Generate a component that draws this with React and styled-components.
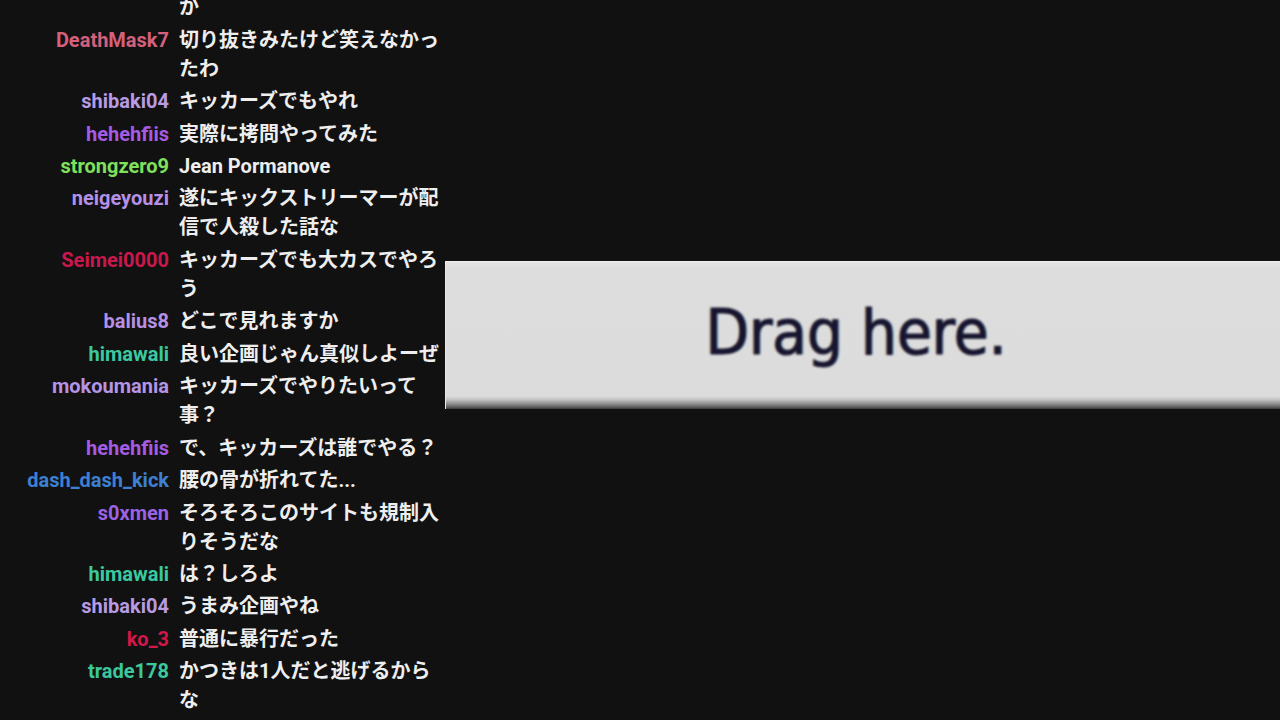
import React from "react";
import styled, { createGlobalStyle } from "styled-components";

const Global = createGlobalStyle`
  html, body { margin: 0; padding: 0; background: #111111; }
  body { overflow: hidden; }
  * { box-sizing: border-box; }
`;

const Page = styled.div`
  width: 1280px;
  height: 720px;
  display: flex;
  background: #111111;
  overflow: hidden;
`;

const ChatPanel = styled.div`
  width: 445px;
  height: 720px;
  flex: none;
  display: flex;
  flex-direction: column;
  justify-content: flex-end;
  overflow: hidden;
  padding: 0 4px 3px 0;
  font-family: "Roboto", "Noto Sans CJK JP", sans-serif;
  font-weight: 700;
  font-size: 20px;
`;

const Row = styled.div`
  display: grid;
  grid-template-columns: 169px 1fr;
  column-gap: 10px;
  padding: 1.72px 0;
  line-height: 29px;
  flex: none;
`;

const Name = styled.span`
  text-align: right;
  white-space: nowrap;
  color: ${(p) => p.$color};
`;

const Message = styled.span`
  color: #eeeeee;
  word-break: break-all;
  line-break: strict;
`;

const Stage = styled.div`
  flex: 1;
  display: flex;
  flex-direction: column;
  padding-top: 261px;
`;

const DropBox = styled.div`
  height: 148px;
  display: flex;
  align-items: center;
  justify-content: center;
  padding-top: 2px;
  padding-bottom: 8px;
  border-top: 1px solid #ededed;
  border-left: 1px solid #e8e8e8;
  background: linear-gradient(
    to bottom,
    #e4e4e4 0px,
    #dddddd 6px,
    #dcdcdc calc(100% - 13px),
    #c9c9c9 calc(100% - 10px),
    #9a9a9a calc(100% - 6px),
    #606060 calc(100% - 2px),
    #3a3a3a 100%
  );
`;

const DropText = styled.span`
  font-family: "DejaVu Sans Condensed", "DejaVu Sans", sans-serif;
  font-stretch: condensed;
  font-size: 63px;
  color: #17142f;
  -webkit-text-stroke: 1px #17142f;
  margin-left: -14px;
  text-shadow: -1.5px 0 rgba(214, 160, 70, 0.6), 1.5px 0 rgba(70, 160, 220, 0.55);
  filter: blur(0.8px);
`;

const messages = [
  { name: "kanamin", color: "#b594e6", text: "それは本当に事件になったのか" },
  { name: "DeathMask7", color: "#d4607c", text: "切り抜きみたけど笑えなかったわ" },
  { name: "shibaki04", color: "#b89be2", text: "キッカーズでもやれ" },
  { name: "hehehfiis", color: "#a55be2", text: "実際に拷問やってみた" },
  { name: "strongzero9", color: "#7fe05c", text: "Jean Pormanove" },
  { name: "neigeyouzi", color: "#b590e6", text: "遂にキックストリーマーが配信で人殺した話な" },
  { name: "Seimei0000", color: "#c9184c", text: "キッカーズでも大カスでやろう" },
  { name: "balius8", color: "#b590e3", text: "どこで見れますか" },
  { name: "himawali", color: "#3ac9a0", text: "良い企画じゃん真似しよーぜ" },
  { name: "mokoumania", color: "#b594e6", text: "キッカーズでやりたいって事？" },
  { name: "hehehfiis", color: "#a55be2", text: "で、キッカーズは誰でやる？" },
  { name: "dash_dash_kick", color: "#3d80d2", text: "腰の骨が折れてた..." },
  { name: "s0xmen", color: "#9c62e2", text: "そろそろこのサイトも規制入りそうだな" },
  { name: "himawali", color: "#3ac9a0", text: "は？しろよ" },
  { name: "shibaki04", color: "#b89be2", text: "うまみ企画やね" },
  { name: "ko_3", color: "#d0184a", text: "普通に暴行だった" },
  { name: "trade178", color: "#3cc89c", text: "かつきは1人だと逃げるからな" },
];

export default function App() {
  return (
    <Page>
      <Global />
      <ChatPanel>
        {messages.map((m, i) => (
          <Row key={i}>
            <Name $color={m.color}>{m.name}</Name>
            <Message>{m.text}</Message>
          </Row>
        ))}
      </ChatPanel>
      <Stage>
        <DropBox>
          <DropText>Drag here.</DropText>
        </DropBox>
      </Stage>
    </Page>
  );
}
